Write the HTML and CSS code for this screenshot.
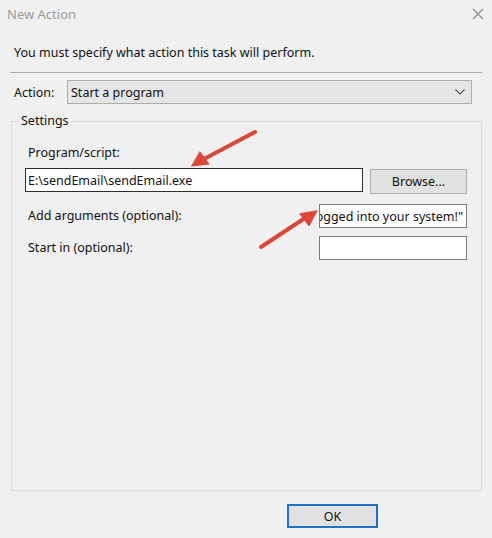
FILE: index.html
```html
<!DOCTYPE html>
<html lang="en">
<head>
    <meta charset="UTF-8">
    <title>New Action</title>
    <link rel="stylesheet" href="styles.css">
</head>
<body>
    <div class="window">
        <div class="titlebar">
            <span class="title">New Action</span>
            <svg class="close" width="12" height="12" viewBox="0 0 12 12">
                <path d="M1 1 L11 11 M11 1 L1 11" stroke="#8a8a8a" stroke-width="1.2" fill="none"/>
            </svg>
        </div>

        <div class="content">
            <p class="intro">You must specify what action this task will perform.</p>

            <div class="action-row">
                <span class="action-label">Action:</span>
                <div class="select">
                    <span>Start a program</span>
                    <svg width="10" height="6" viewBox="0 0 10 6">
                        <path d="M0.5 0.5 L5 5 L9.5 0.5" stroke="#555" stroke-width="1.1" fill="none"/>
                    </svg>
                </div>
            </div>

            <fieldset class="settings">
                <legend>Settings</legend>
                <div class="field-label">Program/script:</div>
                <div class="program-row">
                    <div class="textbox focused">E:\sendEmail\sendEmail.exe</div>
                    <div class="button">Browse...</div>
                </div>
                <div class="option-row args">
                    <span class="field-label">Add arguments (optional):</span>
                    <div class="textbox short scrolled"><span>-m "Someone has logged into your system!"</span></div>
                </div>
                <div class="option-row start">
                    <span class="field-label">Start in (optional):</span>
                    <div class="textbox short"></div>
                </div>
            </fieldset>

            <div class="footer">
                <div class="button ok">OK</div>
            </div>
        </div>

        <!-- red arrows drawn over the screenshot -->
        <svg class="annotations" width="492" height="538" viewBox="0 0 492 538">
            <g fill="#dc4639" stroke="#dc4639" stroke-linecap="round" stroke-linejoin="round">
                <line x1="255" y1="132" x2="204" y2="159" stroke-width="4"/>
                <polygon points="192,166 209,164 200,152" stroke-width="1"/>
                <line x1="261" y1="247" x2="305" y2="218" stroke-width="4"/>
                <polygon points="317,211 309,226 300,214" stroke-width="1"/>
            </g>
        </svg>
    </div>
</body>
</html>
```

FILE: styles.css
```css
body {
    margin: 0;
    font-family: 'Noto Sans', 'Open Sans', sans-serif;
    font-size: 12.5px;
    color: #111;
    background-color: #f0f0f0;
}
.window {
    position: relative;
    width: 492px;
    height: 538px;
    background-color: #f0f0f0;
    overflow: hidden;
}
.titlebar {
    height: 29px;
    display: flex;
    align-items: center;
    justify-content: space-between;
    padding: 0 8px 0 7px;
}
.title {
    color: #9a9a9a;
    font-size: 13px;
    margin-top: -1px;
}
.close {
    margin-top: -1px;
}
.content {
    padding: 0 10px;
}
.intro {
    margin: 15px 0 0;
    padding: 0 0 10px 4px;
    line-height: 18px;
    border-bottom: 1px solid #a9a9a9;
}
.action-row {
    display: flex;
    align-items: center;
    margin-top: 7px;
    padding-left: 4px;
}
.action-label {
    width: 53px;
}
.select {
    box-sizing: border-box;
    width: 405px;
    height: 24px;
    display: flex;
    align-items: center;
    justify-content: space-between;
    padding: 0 6px 0 3px;
    background-color: #e5e5e5;
    border: 1px solid #adadad;
}
.settings {
    box-sizing: border-box;
    height: 379px;
    margin: 8px 1px 0;
    padding: 14px 14px 0 13px;
    border: 1px solid #dcdcdc;
}
.settings legend {
    margin-left: -6px;
    padding: 0 2px;
    line-height: 18px;
}
.field-label {
    padding-left: 3px;
    line-height: 18px;
}
.program-row {
    display: flex;
    gap: 7px;
    margin-top: 6px;
}
.textbox {
    box-sizing: border-box;
    width: 338px;
    height: 24px;
    display: flex;
    align-items: center;
    padding: 0 3px 0 2px;
    background-color: #fff;
    border: 1px solid #7a7a7a;
    white-space: nowrap;
    overflow: hidden;
}
.textbox.focused {
    border-color: #2d2d2d;
}
.textbox.short {
    width: 148px;
}
.textbox.scrolled {
    justify-content: flex-end;
}
.button {
    box-sizing: border-box;
    display: flex;
    align-items: center;
    justify-content: center;
    width: 97px;
    height: 25px;
    margin-top: 1px;
    background-color: #e1e1e1;
    border: 1px solid #adadad;
}
.option-row {
    display: flex;
    align-items: center;
    justify-content: space-between;
}
.option-row.args {
    margin-top: 10px;
}
.option-row.start {
    margin-top: 8px;
}
.footer {
    display: flex;
    justify-content: flex-end;
    padding: 13px 104px 0 0;
}
.button.ok {
    width: 91px;
    height: 24px;
    margin: 0;
    border: 2px solid #1f74c8;
}
.annotations {
    position: absolute;
    top: 0;
    left: 0;
    pointer-events: none;
}
```
